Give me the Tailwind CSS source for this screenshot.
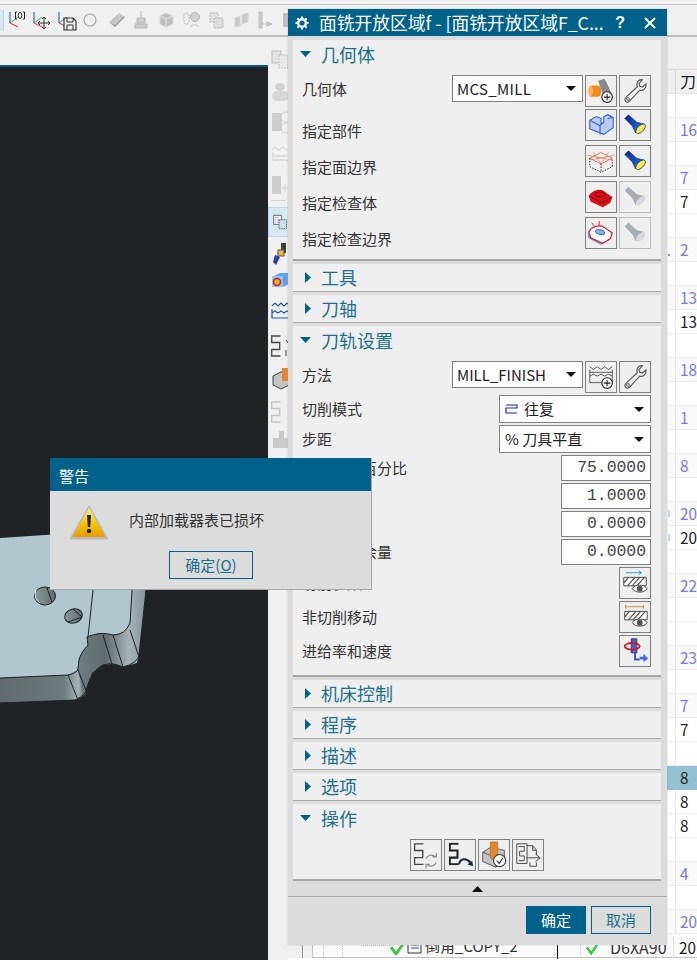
<!DOCTYPE html>
<html lang="zh">
<head>
<meta charset="utf-8">
<script src="https://cdn.jsdelivr.net/npm/@tailwindcss/browser@4"></script>
<title>面铣开放区域</title>
</head>
<body class="m-0">
<svg class="absolute w-0 h-0">
  <defs>
    <linearGradient id="fl" x1="0" y1="0" x2="1" y2="1"><stop offset="0" stop-color="#0a2a80"/><stop offset=".6" stop-color="#1c55c8"/><stop offset="1" stop-color="#6aa8ee"/></linearGradient>
    <linearGradient id="wy" x1="0" y1="0" x2="0" y2="1"><stop offset="0" stop-color="#fff27a"/><stop offset=".55" stop-color="#f5c400"/><stop offset="1" stop-color="#e89a00"/></linearGradient>
    <linearGradient id="notch" x1="0" y1="0" x2="1" y2="0"><stop offset="0" stop-color="#6f7e80"/><stop offset=".4" stop-color="#5f6c6e"/><stop offset=".75" stop-color="#a6b4b6"/><stop offset="1" stop-color="#83939a"/></linearGradient>
    <linearGradient id="hole" x1="0" y1="0" x2="1" y2="0"><stop offset="0" stop-color="#8d9b9e"/><stop offset="1" stop-color="#5f6c6e"/></linearGradient>
    <linearGradient id="lowerwall" x1="0" y1="0" x2="1" y2="0"><stop offset="0" stop-color="#5f6c6e"/><stop offset=".75" stop-color="#6d7b7d"/><stop offset=".92" stop-color="#a6b4b6"/><stop offset="1" stop-color="#505c5e"/></linearGradient>
    <symbol id="wrench" viewBox="0 0 32 32"><path d="M24 4c-3-.6-6 1.600-6 5 0 1 .2 1.700.5 2.500L6.500 22.500c-1.500 1.300-1.700 3.300-.4 4.500 1.200 1.200 3.100 1 4.300-.4L21 15c3.600 1 7-1.700 6.800-5.500l-.1-1-3.700 3.300-3-.8-.7-2.900z" fill="#f4f4f4" stroke="#5c5c5c" stroke-width="1.300"/><circle cx="8.500" cy="24.500" r="1.500" fill="none" stroke="#5c5c5c"/></symbol>
    <symbol id="torch" viewBox="0 0 32 32"><path d="M5 9L9 5l9 8 8 2-9.500 9.500L13 17z" fill="url(#fl)" stroke="#0a1f66" stroke-width=".5"/><ellipse cx="22" cy="20" rx="6.500" ry="3.300" transform="rotate(-45 22 20)" fill="#f4ee55" stroke="#123" stroke-width=".7"/></symbol>
    <symbol id="torchoff" viewBox="0 0 32 32"><path d="M5 9L9 5l9 8 8 2-9.500 9.500L13 17z" fill="#a7acb5"/><ellipse cx="22" cy="20" rx="6.500" ry="3.300" transform="rotate(-45 22 20)" fill="#d6d9dd"/></symbol>
    <symbol id="plus" viewBox="0 0 12 12"><circle cx="6" cy="6" r="5.200" fill="#fff" stroke="#222" stroke-width="1.100"/><path d="M6 2.800v6.400M2.800 6h6.400" stroke="#222" stroke-width="1.100"/></symbol>
    <symbol id="eye" viewBox="0 0 18 12"><path d="M1 6c3-5 13-5 16 0-3 5-13 5-16 0z" fill="#fff" stroke="#444" stroke-width="1"/><circle cx="9" cy="6" r="3.200" fill="#555"/></symbol>
    <symbol id="zig" viewBox="0 0 10 22"><path d="M9.500 1H.7v6.500h8v7H.7V21h8.800" fill="none" stroke="currentColor" stroke-width="1.300"/></symbol>
    <symbol id="zigb" viewBox="0 0 10 22"><path d="M9.500 1H1v6.500h7.500v7H1V21h8.500" fill="none" stroke="currentColor" stroke-width="2"/></symbol>
  </defs>
</svg>

<div class="relative w-[697px] h-[960px] overflow-hidden bg-[#f0f0f0] flex flex-col font-['Noto_Sans_CJK_SC','Noto_Sans',sans-serif]">

  <!-- top toolbar -->
  <div class="h-[33px] shrink-0 mt-[4px] border-t border-b-2 border-t-[#c4c4c4] border-b-[#bdbdbd] flex items-center">
    <div class="w-[4px] h-[21px] bg-[#d3e8f3] border-r border-[#b5d6e6]"></div>
    <svg class="ml-[4px]" width="20" height="22" viewBox="0 0 20 22"><path d="M2 3v11" stroke="#2b3fb0" fill="none"/><path d="M2 14l8-6" stroke="#35b035" fill="none"/><path d="M2 14l8 4" stroke="#e02b2b" fill="none"/><path d="M9 3H7.500v7H9M15 3h1.500v7H15" fill="none" stroke="#222"/><ellipse cx="12" cy="6.500" rx="1.800" ry="3" fill="none" stroke="#222"/></svg>
    <svg class="ml-[4px]" width="20" height="22" viewBox="0 0 20 22"><path d="M2 3v11" stroke="#2b3fb0" fill="none"/><path d="M2 14l8-6" stroke="#35b035" fill="none"/><path d="M2 14l8 4" stroke="#e02b2b" fill="none"/><path d="M12 8v12M6 14h12M12 8l-2 2M12 8l2 2M12 20l-2-2M12 20l2-2M6 14l2-2M6 14l2 2M18 14l-2-2M18 14l-2 2" stroke="#333" fill="none"/></svg>
    <svg class="ml-[5px]" width="20" height="22" viewBox="0 0 20 22"><path d="M2 3v11" stroke="#2b3fb0" fill="none"/><path d="M2 14l8-6" stroke="#35b035" fill="none"/><path d="M2 14l8 4" stroke="#e02b2b" fill="none"/><path d="M7 9h9l3 3v9H7z" fill="#f0f0f0" stroke="#333" stroke-width="1.200"/><path d="M10 9v4h6V9M10 21v-5h6v5" fill="none" stroke="#333"/></svg>
    <svg class="ml-[6px]" width="14" height="14" viewBox="0 0 14 14"><circle cx="7" cy="7" r="6" fill="none" stroke="#a8a8a8" stroke-width="1.200"/></svg>
    <svg class="ml-[11px]" width="18" height="16" viewBox="0 0 18 16"><path d="M1 10L11 1l6 4-10 10z" fill="#c6c6c6"/><path d="M1 10l6 5 10-10-1-1-9 9z" fill="#a0a0a0"/></svg>
    <svg class="ml-[8px]" width="14" height="18" viewBox="0 0 14 18"><path d="M7 0v6M3 7h8v5H3zM1 13h12v4H1z" fill="#cdcdcd" stroke="#b4b4b4"/></svg>
    <svg class="ml-[10px]" width="17" height="16" viewBox="0 0 17 16"><path d="M2 4l6-3 7 3v8l-7 3-6-3z" fill="#bfbfbf" stroke="#d6d6d6"/><path d="M2 4l6 3 7-3M8 7v8" stroke="#e0e0e0" fill="none"/></svg>
    <svg class="ml-[8px]" width="17" height="19" viewBox="0 0 17 19"><rect x="1" y="2" width="5" height="11" rx="2" fill="none" stroke="#b4b4b4" stroke-dasharray="2 1"/><circle cx="12" cy="6" r="4.500" fill="#d2d2d2" stroke="#b4b4b4"/><path d="M7 16c2-3 7-3 9 0" fill="none" stroke="#c4c4c4"/></svg>
    <svg class="ml-[9px]" width="15" height="18" viewBox="0 0 15 18"><rect x="1" y="2" width="8" height="9" fill="#e2e2e2" stroke="#b4b4b4" stroke-dasharray="2 1"/><rect x="5" y="7" width="9" height="10" rx="1" fill="#dedede" stroke="#b4b4b4" stroke-dasharray="2 1"/></svg>
    <svg class="ml-[10px]" width="15" height="16" viewBox="0 0 15 16"><path d="M1 6l5-2v10l-5 1zM8 3l6-2v9l-6 2z" fill="#c8c8c8" stroke="#d6d6d6"/></svg>
    <svg class="ml-[9px]" width="16" height="18" viewBox="0 0 16 18"><path d="M1 1h3v16H1zM4 13h5M9 11l5 2-5 2z" fill="#cacaca" stroke="#bebebe"/></svg>
    <svg class="ml-[9px]" width="8" height="14" viewBox="0 0 8 14"><rect width="8" height="14" fill="#bebebe"/></svg>
  </div>

  <!-- main row -->
  <div class="flex flex-1 min-h-0">
    <!-- graphics window -->
    <div class="w-[268px] shrink-0 mt-[28px] border-t-[2px] border-[#0b5a7c] bg-[#212226] relative overflow-hidden">
      <svg class="absolute left-0 top-[-67px]" width="268" height="960" viewBox="0 0 268 960">
        <path d="M0 678L68 675 78 670 85 695 75 700 0 703z" fill="url(#lowerwall)"/>
        <path d="M78 670L79 660 82 652 88 645 87 637 100 633 113 635 125 632 130 623 132 590 146 590 139 655 137 663 123 667 113 664 103 665 92 673 87 687 85 695z" fill="url(#notch)"/>
        <path d="M0 538L60 534 140 530 132 590 130 623 125 632 113 635 100 633 87 637 88 645 82 652 79 660 78 670 68 675 0 678z" fill="#b2c6ce"/>
        <path d="M0 678L68 675Q78 673 78 668L79 660Q80 654 88 645L87 637Q100 631 113 635 125 635 130 623L132 590M146 590L139 655Q138 663 123 667 113 662 103 665 92 670 87 687 87 695 75 700L0 703" fill="none" stroke="#1c2226" stroke-width="1"/>
        <path d="M68 675L78 700M78 670L87 693M103 635L112 664M113 635L123 667M130 630L139 657M93 590L88 637" fill="none" stroke="#1d2426" stroke-width="1"/>
        <ellipse cx="45" cy="596" rx="10.500" ry="9" fill="url(#hole)" stroke="#1c2226"/>
        <path d="M36 590q-3 8 4 13" fill="none" stroke="#eef" />
        <path d="M47 588l5 14" stroke="#1c2226" fill="none"/>
        <ellipse cx="73.500" cy="616" rx="9" ry="7" transform="rotate(-15 73.500 616)" fill="url(#hole)" stroke="#1c2226"/>
        <path d="M73 609l9 8-14 5" fill="none" stroke="#1c2226"/>
      </svg>
    </div>

    <!-- vertical strip -->
    <div class="w-[20px] shrink-0 relative flex flex-col items-center pt-[12px]">
      <svg class="ml-[6px]" width="20" height="24" viewBox="0 0 20 24"><rect x="1" y="2" width="9" height="12" fill="#e2e2e2" stroke="#bbb"/><rect x="8" y="6" width="9" height="13" fill="#e9e9e9" stroke="#bbb" stroke-dasharray="2 1"/></svg>
      <svg class="ml-[6px] mt-[8px]" width="20" height="24" viewBox="0 0 20 24"><ellipse cx="9" cy="6" rx="5" ry="4" fill="#d2d2d2"/><rect x="1" y="10" width="17" height="10" rx="5" fill="#d6d6d6"/></svg>
      <svg class="ml-[6px] mt-[6px]" width="20" height="24" viewBox="0 0 20 24"><rect x="1" y="2" width="10" height="18" fill="#cdcdcd"/><circle cx="15" cy="6" r="5" fill="none" stroke="#d4d4d4"/><circle cx="15" cy="17" r="5" fill="none" stroke="#d4d4d4"/></svg>
      <svg class="ml-[6px] mt-[9px]" width="20" height="24" viewBox="0 0 20 24"><path d="M1 6l3-3 4 3 4-3 4 3M2 8v8h14M2 12h14M16 16l3 3" fill="none" stroke="#cfcfcf"/></svg>
      <svg class="ml-[6px] mt-[6px]" width="20" height="24" viewBox="0 0 20 24"><rect x="1" y="2" width="9" height="18" fill="#cdcdcd"/><path d="M11 14h8M14 10v8" stroke="#d0d0d0"/></svg>
      <div class="w-[15px] h-px bg-[#d2d2d2] mt-[2px]"></div>
      <div class="w-[20px] h-[30px] mt-[6px] bg-[#d6e8f1] border border-r-0 border-[#bcd9e7] flex items-center justify-center">
        <svg class="ml-[4px]" width="20" height="22" viewBox="0 0 20 22"><rect x="1" y="2" width="10" height="12" fill="#fff" stroke="#345"/><path d="M3 5h6M3 8h6M3 11h6" stroke="#556" stroke-dasharray="1 1"/><rect x="8" y="8" width="10" height="12" fill="#cfe0ee" stroke="#345" stroke-dasharray="2 1"/></svg>
      </div>
      <svg class="ml-[5px] mt-[5px]" width="20" height="24" viewBox="0 0 20 24"><path d="M10 1h5v10h-5z" fill="#3d3d3d"/><rect x="7" y="8" width="6" height="6" fill="#f2b23a" stroke="#555"/><path d="M4 13l5 2-4 8-3-3z" fill="#2b3fb0"/></svg>
      <svg class="ml-[5px] mt-[4px]" width="20" height="20" viewBox="0 0 20 20"><path d="M3 6l6-3h9v11l-6 3H3z" fill="#5ca2ea"/><rect x="1" y="6" width="11" height="11" fill="#8fc4f4"/><circle cx="6" cy="12" r="3.500" fill="#f0b020" stroke="#c82020" stroke-width="1.500"/></svg>
      <svg class="ml-[5px] mt-[11px]" width="20" height="20" viewBox="0 0 20 20"><path d="M1 5l3-3 3 3 3-3 3 3 3-3 3 3M1 8v9h18V8M1 12l3-2 3 2 3-2 3 2 3-2 3 2" fill="none" stroke="#1a5ea8" stroke-width="1.200"/></svg>
      <svg class="ml-[5px] mt-[13px] text-[#444]" width="20" height="24" viewBox="0 0 20 24"><use href="#zig" width="10" height="22" x="0" y="1"/><path d="M15 6l3 4M15 16v6" stroke="#444" fill="none"/></svg>
      <svg class="ml-[5px] mt-[9px]" width="20" height="24" viewBox="0 0 20 24"><path d="M2 9l10-5 6 3v11l-8 4-8-4z" fill="#c4c4c4" stroke="#444"/><path d="M11 1h7v13h-7z" fill="#e2872e"/></svg>
      <svg class="ml-[5px] mt-[9px] text-[#c4c4c4]" width="20" height="24" viewBox="0 0 20 24"><use href="#zig" width="10" height="22" x="0" y="1"/></svg>
      <svg class="ml-[5px] mt-[6px]" width="20" height="20" viewBox="0 0 20 20"><path d="M8 1h5v7h5v10H2V8h6z" fill="#cacaca"/></svg>
      <div class="h-[114px]"></div>
      <svg class="ml-[5px]" width="20" height="20" viewBox="0 0 20 20"><path d="M3 2h12l3 12H1z" fill="#d8d8d8"/></svg>
      <div class="w-[15px] h-px bg-[#c9c9c9] mt-[3px]"></div>
    </div>

    <!-- operation table -->
    <div class="flex-1 min-w-0 flex flex-col text-[15.300px] text-[#7b79d9] leading-[23px] mt-[32px] bg-white whitespace-nowrap border-t border-[#dcdcdc]">
      <div class="flex h-6 justify-end shrink-0 bg-[#f0f0f0] border-b border-[#e2e2e2] text-[#222]"><div class="w-[22px] pl-[4px] border-l border-[#d8d8d8] text-[16px]">刀</div></div>
      <div class="flex h-6 justify-end shrink-0 border-b border-[#ededed]"><div class="w-[22px] pl-[4px] border-l border-[#eaeaea]"></div></div>
      <div class="flex h-6 justify-end shrink-0 border-b border-[#ededed] bg-[#fafafa]"><div class="w-[22px] pl-[4px] border-l border-[#eaeaea]">16</div></div>
      <div class="flex h-6 justify-end shrink-0 border-b border-[#ededed]"><div class="w-[22px] pl-[4px] border-l border-[#eaeaea]"></div></div>
      <div class="flex h-6 justify-end shrink-0 border-b border-[#ededed] bg-[#fafafa]"><div class="w-[22px] pl-[4px] border-l border-[#eaeaea]">7</div></div>
      <div class="flex h-6 justify-end shrink-0 border-b border-[#ededed] text-[#222]"><div class="w-[22px] pl-[4px] border-l border-[#eaeaea]">7</div></div>
      <div class="flex h-6 justify-end shrink-0 border-b border-[#ededed]"><div class="w-[22px] pl-[4px] border-l border-[#eaeaea]"></div></div>
      <div class="flex h-6 justify-end shrink-0 border-b border-[#ededed] bg-[#fafafa]"><span class="mr-[4px]">.</span><div class="w-[22px] pl-[4px] border-l border-[#eaeaea]">2</div></div>
      <div class="flex h-6 justify-end shrink-0 border-b border-[#ededed]"><div class="w-[22px] pl-[4px] border-l border-[#eaeaea]"></div></div>
      <div class="flex h-6 justify-end shrink-0 border-b border-[#ededed] bg-[#fafafa]"><div class="w-[22px] pl-[4px] border-l border-[#eaeaea]">13</div></div>
      <div class="flex h-6 justify-end shrink-0 border-b border-[#ededed] text-[#222]"><div class="w-[22px] pl-[4px] border-l border-[#eaeaea]">13</div></div>
      <div class="flex h-6 justify-end shrink-0 border-b border-[#ededed]"><div class="w-[22px] pl-[4px] border-l border-[#eaeaea]"></div></div>
      <div class="flex h-6 justify-end shrink-0 border-b border-[#ededed] bg-[#fafafa]"><div class="w-[22px] pl-[4px] border-l border-[#eaeaea]">18</div></div>
      <div class="flex h-6 justify-end shrink-0 border-b border-[#ededed]"><div class="w-[22px] pl-[4px] border-l border-[#eaeaea]"></div></div>
      <div class="flex h-6 justify-end shrink-0 border-b border-[#ededed] bg-[#fafafa]"><div class="w-[22px] pl-[4px] border-l border-[#eaeaea]">1</div></div>
      <div class="flex h-6 justify-end shrink-0 border-b border-[#ededed]"><div class="w-[22px] pl-[4px] border-l border-[#eaeaea]"></div></div>
      <div class="flex h-6 justify-end shrink-0 border-b border-[#ededed] bg-[#fafafa]"><div class="w-[22px] pl-[4px] border-l border-[#eaeaea]">8</div></div>
      <div class="flex h-6 justify-end shrink-0 border-b border-[#ededed]"><div class="w-[22px] pl-[4px] border-l border-[#eaeaea]"></div></div>
      <div class="flex h-6 justify-end items-center shrink-0 border-b border-[#ededed] bg-[#fafafa]"><span class="w-[2px] h-[7px] mr-[5px] bg-[#c6dde8]"></span><div class="w-[22px] h-full pl-[4px] border-l border-[#eaeaea]">20</div></div>
      <div class="flex h-6 justify-end items-center shrink-0 border-b border-[#ededed] text-[#222]"><span class="w-[2px] h-[7px] mr-[5px] bg-[#c6dde8]"></span><div class="w-[22px] h-full pl-[4px] border-l border-[#eaeaea]">20</div></div>
      <div class="flex h-6 justify-end shrink-0 border-b border-[#ededed]"><div class="w-[22px] pl-[4px] border-l border-[#eaeaea]"></div></div>
      <div class="flex h-6 justify-end shrink-0 border-b border-[#ededed] bg-[#fafafa]"><div class="w-[22px] pl-[4px] border-l border-[#eaeaea]">22</div></div>
      <div class="flex h-6 justify-end shrink-0 border-b border-[#ededed]"><div class="w-[22px] pl-[4px] border-l border-[#eaeaea]"></div></div>
      <div class="flex h-6 justify-end shrink-0 border-b border-[#ededed]"><div class="w-[22px] pl-[4px] border-l border-[#eaeaea]"></div></div>
      <div class="flex h-6 justify-end shrink-0 border-b border-[#ededed] bg-[#fafafa]"><div class="w-[22px] pl-[4px] border-l border-[#eaeaea]">23</div></div>
      <div class="flex h-6 justify-end shrink-0 border-b border-[#ededed]"><div class="w-[22px] pl-[4px] border-l border-[#eaeaea]"></div></div>
      <div class="flex h-6 justify-end shrink-0 border-b border-[#ededed] bg-[#fafafa]"><div class="w-[22px] pl-[4px] border-l border-[#eaeaea]">7</div></div>
      <div class="flex h-6 justify-end shrink-0 border-b border-[#ededed] text-[#222]"><div class="w-[22px] pl-[4px] border-l border-[#eaeaea]">7</div></div>
      <div class="flex h-6 justify-end shrink-0 border-b border-[#ededed]"><div class="w-[22px] pl-[4px] border-l border-[#eaeaea]"></div></div>
      <div class="flex h-6 justify-end shrink-0 bg-[#93c1d1] text-[#222]"><div class="w-[22px] pl-[5px]">8</div></div>
      <div class="flex h-6 justify-end shrink-0 border-b border-[#ededed] text-[#222]"><div class="w-[22px] pl-[4px] border-l border-[#eaeaea]">8</div></div>
      <div class="flex h-6 justify-end shrink-0 border-b border-[#ededed] text-[#222]"><div class="w-[22px] pl-[4px] border-l border-[#eaeaea]">8</div></div>
      <div class="flex h-6 justify-end shrink-0 border-b border-[#ededed]"><div class="w-[22px] pl-[4px] border-l border-[#eaeaea]"></div></div>
      <div class="flex h-6 justify-end shrink-0 border-b border-[#ededed] bg-[#fafafa]"><div class="w-[22px] pl-[4px] border-l border-[#eaeaea]">4</div></div>
      <div class="flex h-6 justify-end shrink-0 border-b border-[#ededed]"><div class="w-[22px] pl-[4px] border-l border-[#eaeaea]"></div></div>
      <div class="flex h-6 justify-end shrink-0 border-b border-[#ededed] bg-[#fafafa]"><div class="w-[22px] pl-[4px] border-l border-[#eaeaea]">20</div></div>
      <!-- last row, partly under the dialog -->
      <div class="flex h-6 shrink-0 bg-[#f0f0f0] text-[#222]">
        <div class="w-[15px] border-r border-[#9a9a9a]"></div>
        <div class="w-[9px]"></div>
        <div class="flex-1 flex items-center bg-[#fafafa] border-l border-b border-[#c4c4c4]">
          <div class="w-[10px] h-full"></div>
          <div class="w-[19px] h-full border-l border-dotted border-[#c0c0c0]"></div>
          <div class="w-[19px] h-full border-l border-dotted border-[#c0c0c0]"></div>
          <div class="w-[29px] h-[12px] border-l border-b border-dotted border-[#c0c0c0] self-start"></div>
          <svg class="mt-[6px]" width="14" height="12" viewBox="0 0 14 12"><path d="M1 4l5 7 7-10" fill="none" stroke="#3ecb3e" stroke-width="3"/></svg>
          <svg class="ml-[3px] mt-[2px]" width="15" height="14" viewBox="0 0 15 14"><path d="M1 1h13v12H1z" fill="#fff" stroke="#333"/><path d="M4 5h8M4 8h8" stroke="#2b3fb0"/></svg>
          <div class="w-[133px] ml-[3px] mt-[4px] border-r border-black h-full text-[#333] text-[15px] leading-[20px] overflow-hidden">倒角_COPY_2</div>
          <div class="w-[23px] h-full border-r border-[#e2e2e2]"></div>
          <svg class="ml-[5px] mt-[6px]" width="12" height="12" viewBox="0 0 14 12"><path d="M1 4l5 7 7-10" fill="none" stroke="#3ecb3e" stroke-width="3"/></svg>
          <div class="w-[64px] ml-[12px] mt-[3px] h-full border-r border-[#e2e2e2] text-[#333] text-[16px] overflow-hidden">D6XA90</div>
          <div class="pl-[5px] mt-[3px] h-full text-[#222]">20</div>
        </div>
      </div>
    </div>
  </div>

  <!-- operation dialog -->
  <div class="absolute left-[288px] top-[9px] w-[379px] h-[936px] bg-[#dcdcdc] flex flex-col text-[15px] text-[#333] shadow-[0_0_1px_#999]">
    <div class="h-[27px] shrink-0 bg-[#00628b] text-white flex items-center pl-[7px] pr-[11px]">
      <svg width="14" height="14" viewBox="0 0 14 14"><circle cx="7" cy="7" r="3.800" fill="none" stroke="#fff" stroke-width="2.400"/><path d="M7 .5v2.500M7 11v2.500M.5 7H3M11 7h2.500M2.400 2.400l1.800 1.800M9.800 9.800l1.800 1.800M2.400 11.600l1.800-1.800M9.800 4.200l1.800-1.800" stroke="#fff" stroke-width="2"/></svg>
      <span class="ml-[10px] text-[17.750px] leading-[27px] whitespace-nowrap">面铣开放区域f - [面铣开放区域F_C...</span>
      <span class="ml-auto font-bold text-[16px] font-['Liberation_Sans']">?</span>
      <svg class="ml-[19px]" width="12" height="12" viewBox="0 0 12 12"><path d="M1 1l10 10M11 1L1 11" stroke="#fff" stroke-width="2"/></svg>
    </div>

    <div class="ml-[5px] w-[368px] mt-[4px] flex flex-col gap-[3px]">
      <!-- 几何体 -->
      <section class="h-[221px] bg-[#efefef] border-b-2 border-[#a8a8a8] pl-[9px] pr-[10px]">
        <div class="h-[30px] -ml-[2px] -mt-[1px] flex items-center text-[18px] text-[#1d6f8e]"><svg width="11" height="6" viewBox="0 0 11 6"><path d="M0 0h11L5.500 6z" fill="#00628b"/></svg><span class="ml-[10px]">几何体</span></div>
        <div class="h-[6px]"></div>
        <div class="h-[32px] flex items-start">
          <span class="mt-[4px] leading-[20px]">几何体</span>
          <div class="ml-auto w-[131px] h-[27px] border border-[#7f7f7f] bg-white flex items-center pl-[4px] pr-[6px] text-[#222]"><span class="mt-[1px] tracking-[.35px]">MCS_MILL</span><svg class="ml-auto" width="10" height="5" viewBox="0 0 10 5"><path d="M0 0h10L5 5z" fill="#111"/></svg></div>
          <div class="ml-[2px] w-[32px] h-[32px] border border-[#7f7f7f]"><svg width="30" height="30" viewBox="0 0 32 32"><path d="M13 5l7-2 8 17-9 3z" fill="#8a8a8a"/><rect x="3" y="10" width="13" height="12" rx="4" fill="#ee8a1e"/><ellipse cx="5" cy="16" rx="2.500" ry="6" fill="#f9b25c"/><use href="#plus" x="16" y="16" width="13" height="13"/></svg></div>
          <div class="ml-[2px] w-[32px] h-[32px] border border-[#7f7f7f]"><svg width="30" height="30"><use href="#wrench" width="30" height="30"/></svg></div>
        </div>
        <div class="h-[32px] mt-[2px] flex items-end">
          <span class="leading-[20px]">指定部件</span>
          <div class="ml-auto w-[32px] h-[32px] border border-[#7f7f7f]"><svg width="30" height="30" viewBox="0 0 32 32"><path d="M4 11l7-4 5 2v6l3-2V7l4-2 6 3v11l-10 7-15-6z" fill="#b7cdf5" stroke="#3e68c8" stroke-width="1.200"/><path d="M4 11l11 6v9M15 17l4-4M23 5l6 3M23 9l6-1" fill="none" stroke="#3e68c8" stroke-width="1.200"/></svg></div>
          <div class="ml-[2px] w-[32px] h-[32px] border border-[#7f7f7f]"><svg width="30" height="30"><use href="#torch" width="30" height="30"/></svg></div>
        </div>
        <div class="h-[32px] mt-[4px] flex items-end">
          <span class="leading-[20px]">指定面边界</span>
          <div class="ml-auto w-[32px] h-[32px] border border-[#7f7f7f]"><svg width="30" height="30" viewBox="0 0 32 32"><path d="M4 13l12-6 12 6-12 6z" fill="#fff" stroke="#e66a50"/><path d="M8 7l8 12M24 7l-8 12M2 10l26 5M30 10L4 15" fill="none" stroke="#e66a50" stroke-width=".8"/><path d="M4 13v9l12 6 12-6v-9M16 19v9" fill="none" stroke="#222" stroke-dasharray="1.500 1.500"/></svg></div>
          <div class="ml-[2px] w-[32px] h-[32px] border border-[#7f7f7f]"><svg width="30" height="30"><use href="#torch" width="30" height="30"/></svg></div>
        </div>
        <div class="h-[32px] mt-[4px] flex items-end">
          <span class="leading-[20px]">指定检查体</span>
          <div class="ml-auto w-[32px] h-[32px] border border-[#7f7f7f]"><svg width="30" height="30" viewBox="0 0 32 32"><path d="M3 15c2-5 10-8 15-6l10 7-2 6-8 5-13-6z" fill="#d90f18"/><path d="M3 15l14 7 11-6" fill="none" stroke="#7a0a10"/><ellipse cx="15" cy="13" rx="5" ry="2.500" fill="none" stroke="#7a0a10"/></svg></div>
          <div class="ml-[2px] w-[32px] h-[32px] border border-[#bdbdbd]"><svg width="30" height="30"><use href="#torchoff" width="30" height="30"/></svg></div>
        </div>
        <div class="h-[32px] mt-[4px] flex items-end">
          <span class="leading-[20px]">指定检查边界</span>
          <div class="ml-auto w-[32px] h-[32px] border border-[#7f7f7f]"><svg width="30" height="30" viewBox="0 0 32 32"><path d="M3 16v5l13 7 10-6v-6z" fill="#b9cdf3" stroke="#3e68c8"/><path d="M3 15c2-5 10-8 15-6l10 7-2 6-8 5-13-6z" fill="#fff" stroke="#d3202a" stroke-width="1.300"/><ellipse cx="15" cy="15" rx="5" ry="2.500" fill="#8fb1ee" stroke="#3e68c8" transform="rotate(15 15 15)"/><path d="M6 5l4 5M14 3v6" stroke="#d3202a"/></svg></div>
          <div class="ml-[2px] w-[32px] h-[32px] border border-[#bdbdbd]"><svg width="30" height="30"><use href="#torchoff" width="30" height="30"/></svg></div>
        </div>
      </section>

      <section class="h-[28px] bg-[#efefef] border-b-[1.500px] border-[#a8a8a8] pl-[12px] flex items-start"><div class="h-[30px] flex items-center text-[18px] text-[#1d6f8e] -mt-[2px]"><svg width="6" height="11" viewBox="0 0 6 11"><path d="M0 0l6 5.500L0 11z" fill="#00628b"/></svg><span class="ml-[10px]">工具</span></div></section>
      <section class="h-[28px] bg-[#efefef] border-b-[1.500px] border-[#a8a8a8] pl-[12px] flex items-start"><div class="h-[30px] flex items-center text-[18px] text-[#1d6f8e] -mt-[2px]"><svg width="6" height="11" viewBox="0 0 6 11"><path d="M0 0l6 5.500L0 11z" fill="#00628b"/></svg><span class="ml-[10px]">刀轴</span></div></section>

      <!-- 刀轨设置 -->
      <section class="h-[351px] bg-[#efefef] border-b-2 border-[#a8a8a8] pl-[9px] pr-[10px]">
        <div class="h-[30px] -ml-[2px] -mt-[1px] flex items-center text-[18px] text-[#1d6f8e]"><svg width="11" height="6" viewBox="0 0 11 6"><path d="M0 0h11L5.500 6z" fill="#00628b"/></svg><span class="ml-[10px]">刀轨设置</span></div>
        <div class="h-[6px]"></div>
        <div class="h-[32px] flex items-start">
          <span class="mt-[4px] leading-[20px]">方法</span>
          <div class="ml-auto w-[131px] h-[27px] border border-[#7f7f7f] bg-white flex items-center pl-[4px] pr-[6px] text-[#222]"><span class="mt-[1px]">MILL_FINISH</span><svg class="ml-auto" width="10" height="5" viewBox="0 0 10 5"><path d="M0 0h10L5 5z" fill="#111"/></svg></div>
          <div class="ml-[2px] w-[32px] h-[32px] border border-[#7f7f7f]"><svg width="30" height="30" viewBox="0 0 32 32"><path d="M4 5l4 3 4-3 4 3 4-3 4 3 4-3M4 8v14h24V8M4 11h24M4 15l4-2 4 2 4-2 4 2 4-2 4 2" fill="none" stroke="#555"/><use href="#plus" x="16" y="16" width="13" height="13"/></svg></div>
          <div class="ml-[2px] w-[32px] h-[32px] border border-[#7f7f7f]"><svg width="30" height="30"><use href="#wrench" width="30" height="30"/></svg></div>
        </div>
        <div class="h-[28px] mt-[2px] flex items-center">
          <span>切削模式</span>
          <div class="ml-auto w-[152px] h-[28px] border border-[#7f7f7f] bg-white flex items-center pl-[5px] pr-[6px] text-[#222]"><svg width="13" height="10" viewBox="0 0 13 10"><path d="M1 1h11v3H1v5h11" fill="none" stroke="#1a27a8" stroke-width="1.200"/></svg><span class="ml-[6px] mt-[1px]">往复</span><svg class="ml-auto" width="10" height="5" viewBox="0 0 10 5"><path d="M0 0h10L5 5z" fill="#111"/></svg></div>
        </div>
        <div class="h-[28px] mt-[2px] flex items-center">
          <span>步距</span>
          <div class="ml-auto w-[152px] h-[28px] border border-[#7f7f7f] bg-white flex items-center pl-[5px] pr-[6px] text-[#222]"><span>% 刀具平直</span><svg class="ml-auto" width="10" height="5" viewBox="0 0 10 5"><path d="M0 0h10L5 5z" fill="#111"/></svg></div>
        </div>
        <div class="h-[26px] mt-[2px] flex items-center">
          <span>平面直径百分比</span>
          <div class="ml-auto w-[90px] h-[26px] border border-[#7f7f7f] bg-white text-right pr-[4px] text-[#444] font-['Liberation_Mono'] text-[16.400px] leading-[24px]">75.0000</div>
        </div>
        <div class="h-[26px] mt-[2px] flex items-center">
          <span>毛坯距离</span>
          <div class="ml-auto w-[90px] h-[26px] border border-[#7f7f7f] bg-white text-right pr-[4px] text-[#444] font-['Liberation_Mono'] text-[16.400px] leading-[24px]">1.0000</div>
        </div>
        <div class="h-[26px] mt-[2px] flex items-center">
          <span>每刀深度</span>
          <div class="ml-auto w-[90px] h-[26px] border border-[#7f7f7f] bg-white text-right pr-[4px] text-[#444] font-['Liberation_Mono'] text-[16.400px] leading-[24px]">0.0000</div>
        </div>
        <div class="h-[26px] mt-[2px] flex items-center">
          <span>最终底面余量</span>
          <div class="ml-auto w-[90px] h-[26px] border border-[#7f7f7f] bg-white text-right pr-[4px] text-[#444] font-['Liberation_Mono'] text-[16.400px] leading-[24px]">0.0000</div>
        </div>
        <div class="h-[32px] mt-[2px] flex items-center">
          <span>切削参数</span>
          <div class="ml-auto w-[32px] h-[32px] border border-[#7f7f7f]"><svg width="30" height="30" viewBox="0 0 32 32"><path d="M6 5h17M20 3l3 2-3 2" fill="none" stroke="#1fa5c4"/><path d="M4 10h24v9H4z" fill="#fff" stroke="#444"/><path d="M4 16l5-6M8 19l8-9M13 19l8-9M18 19l8-9" stroke="#555" stroke-width="1.300"/><use href="#eye" x="12" y="16" width="18" height="12"/></svg></div>
        </div>
        <div class="h-[32px] mt-[2px] flex items-center">
          <span class="mt-[1px]">非切削移动</span>
          <div class="ml-auto w-[32px] h-[32px] border border-[#7f7f7f]"><svg width="30" height="30" viewBox="0 0 32 32"><path d="M6 5h19M6 3v4M25 3v4" fill="none" stroke="#d98a2e"/><path d="M5 10h24v9H5z" fill="#fff" stroke="#444"/><path d="M5 16l5-6M9 19l8-9M14 19l8-9M19 19l8-9" stroke="#555" stroke-width="1.300"/><use href="#eye" x="12" y="16" width="18" height="12"/></svg></div>
        </div>
        <div class="h-[32px] mt-[2px] flex items-center">
          <span class="mt-[1px]">进给率和速度</span>
          <div class="ml-auto w-[32px] h-[32px] border border-[#7f7f7f]"><svg width="30" height="30" viewBox="0 0 32 32"><path d="M12 3h6v15h-6z" fill="#4a5fc8" stroke="#2b3a90"/><ellipse cx="13" cy="11" rx="8" ry="3.500" fill="none" stroke="#c81f24" stroke-width="2"/><path d="M16 18v7h5" fill="none" stroke="#3a55c8" stroke-width="2"/><path d="M21 22h4v-3l5 5-5 4v-3h-4z" fill="#3a6fe0"/></svg></div>
        </div>
      </section>

      <section class="h-[28px] bg-[#efefef] border-b-[1.500px] border-[#a8a8a8] pl-[12px] flex items-start"><div class="h-[30px] flex items-center text-[18px] text-[#1d6f8e] -mt-[2px]"><svg width="6" height="11" viewBox="0 0 6 11"><path d="M0 0l6 5.500L0 11z" fill="#00628b"/></svg><span class="ml-[10px]">机床控制</span></div></section>
      <section class="h-[28px] bg-[#efefef] border-b-[1.500px] border-[#a8a8a8] pl-[12px] flex items-start"><div class="h-[30px] flex items-center text-[18px] text-[#1d6f8e] -mt-[2px]"><svg width="6" height="11" viewBox="0 0 6 11"><path d="M0 0l6 5.500L0 11z" fill="#00628b"/></svg><span class="ml-[10px]">程序</span></div></section>
      <section class="h-[28px] bg-[#efefef] border-b-[1.500px] border-[#a8a8a8] pl-[12px] flex items-start"><div class="h-[30px] flex items-center text-[18px] text-[#1d6f8e] -mt-[2px]"><svg width="6" height="11" viewBox="0 0 6 11"><path d="M0 0l6 5.500L0 11z" fill="#00628b"/></svg><span class="ml-[10px]">描述</span></div></section>
      <section class="h-[28px] bg-[#efefef] border-b-[1.500px] border-[#a8a8a8] pl-[12px] flex items-start"><div class="h-[30px] flex items-center text-[18px] text-[#1d6f8e] -mt-[2px]"><svg width="6" height="11" viewBox="0 0 6 11"><path d="M0 0l6 5.500L0 11z" fill="#00628b"/></svg><span class="ml-[10px]">选项</span></div></section>

      <!-- 操作 -->
      <section class="h-[77px] bg-[#efefef] border-b-2 border-[#a8a8a8] pl-[10px] pr-[10px]">
        <div class="h-[30px] -ml-[3px] -mt-[1px] flex items-center text-[18px] text-[#1d6f8e]"><svg width="11" height="6" viewBox="0 0 11 6"><path d="M0 0h11L5.500 6z" fill="#00628b"/></svg><span class="ml-[10px]">操作</span></div>
        <div class="h-[6px]"></div>
        <div class="flex justify-center gap-[2px]">
          <div class="w-[32px] h-[32px] border border-[#7f7f7f] text-[#444]"><svg width="30" height="30" viewBox="0 0 32 32"><use href="#zig" x="3" y="3" width="11" height="24"/><path d="M16 20a6 6 0 0 1 10-2M27 24a6 6 0 0 1-10 2M27 14v4h-4M16 30v-4h4" fill="none" stroke="#888" stroke-width="1.200"/></svg></div>
          <div class="w-[32px] h-[32px] border border-[#7f7f7f] text-[#222]"><svg width="30" height="30" viewBox="0 0 32 32"><use href="#zigb" x="4" y="3" width="11" height="24"/><path d="M15 26c1-7 8-7 12-2" fill="none" stroke="#16283c" stroke-width="2.200"/><path d="M24 26l6 2-1-6z" fill="#16283c"/></svg></div>
          <div class="w-[32px] h-[32px] border border-[#7f7f7f]"><svg width="30" height="30" viewBox="0 0 32 32"><path d="M4 13l8-5 15 3v11l-9 7-14-6z" fill="#c4c4c4" stroke="#555"/><path d="M4 13l14 6v10" fill="none" stroke="#555"/><path d="M12 2h8v17l-4 3-4-3z" fill="#e2872e" stroke="#b05f14" stroke-width=".6"/><circle cx="22" cy="22" r="6.500" fill="#fff" stroke="#333" stroke-width="1.200"/><path d="M19 22l2.500 3 4-6" fill="none" stroke="#333" stroke-width="1.200"/></svg></div>
          <div class="w-[32px] h-[32px] border border-[#7f7f7f]"><svg width="30" height="30" viewBox="0 0 32 32"><path d="M4 4h11v21H4zM15 6h6l4 5v5" fill="none" stroke="#444"/><path d="M6 7h6v5H7v5h5v5H6" fill="none" stroke="#444"/><path d="M14 19h14M24 15l5 4-5 4M18 24v4h7v-4M21 6v5h4" fill="none" stroke="#444"/></svg></div>
        </div>
      </section>
    </div>

    <div class="h-[16px] shrink-0 border-b border-[#aaa] flex items-center justify-center"><svg width="11" height="6" viewBox="0 0 11 6"><path d="M0 6h11L5.500 0z" fill="#111"/></svg></div>
    <div class="flex justify-end gap-[5px] pr-[16px] mt-[9px]">
      <div class="w-[60px] h-[28px] bg-[#00628b] text-white text-center leading-[28px]">确定</div>
      <div class="w-[60px] h-[28px] border border-[#00628b] text-[#1d6f8e] text-center leading-[26px]">取消</div>
    </div>
  </div>

  <!-- warning dialog -->
  <div class="absolute left-[50px] top-[458px] w-[322px] h-[132px] bg-[#dcdcdc] border-r border-b border-[#a8a8a8] flex flex-col">
    <div class="h-[33px] shrink-0 bg-[#00628b] text-white text-[15px] leading-[36px] pl-[9px]">警告</div>
    <div class="flex items-center pl-[19px] mt-[13px]">
      <svg width="40" height="36" viewBox="0 0 40 36"><path d="M20 1L39 34a1 1 0 0 1-1 1.500H2A1 1 0 0 1 1 34z" fill="#b9b9b9"/><path d="M20 4L36.500 33H3.500z" fill="url(#wy)"/><path d="M18 11h4l-.8 12h-2.400z" fill="#222"/><circle cx="20" cy="27" r="2.200" fill="#222"/></svg>
      <span class="ml-[20px] -mt-[4px] text-[15px] text-[#333] leading-[20px]">内部加载器表已损坏</span>
    </div>
    <div class="mt-[11px] ml-[119px] w-[84px] h-[28px] border border-[#00628b] text-[#1d6f8e] text-[15px] text-center leading-[26px]">确定(<span class="underline">O</span>)</div>
  </div>
</div>
</body>
</html>
